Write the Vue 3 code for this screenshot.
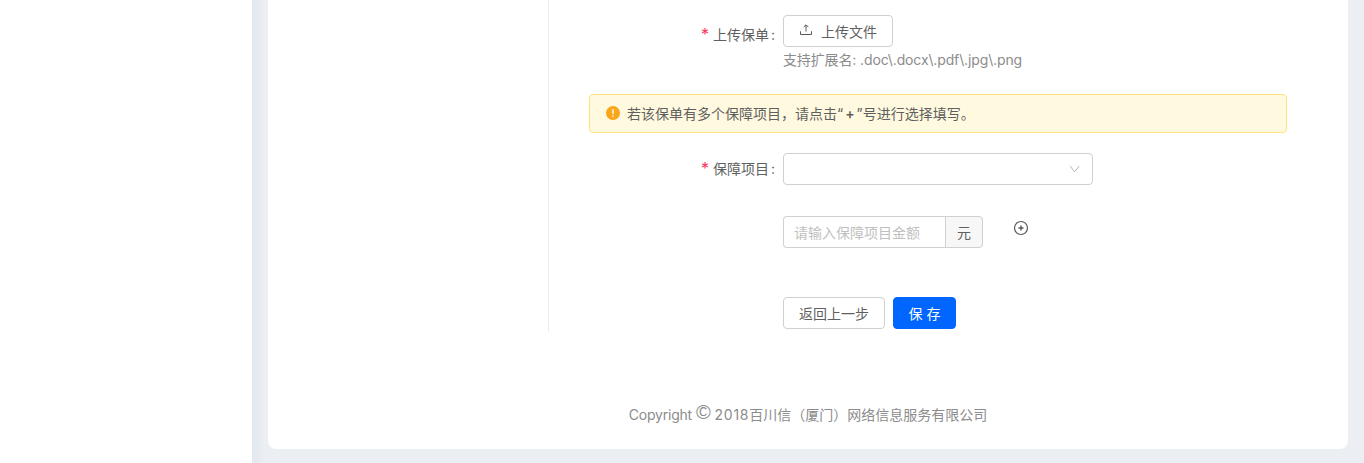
<script setup>
const labelRows = { upload: '上传保单', item: '保障项目' }
</script>

<template>
  <div class="page">
    <aside class="sidebar"></aside>
    <main class="main">
      <section class="card">
        <div class="content">
          <div class="side-panel"></div>
          <div class="form">
            <div class="row upload-row">
              <label class="label"><i class="star">*</i>{{ labelRows.upload }}<span class="colon">:</span></label>
              <div class="control">
                <button class="btn upload-btn" type="button">
                  <svg class="upload-icon" viewBox="0 0 14 14" width="14" height="14" fill="none" stroke="#595959" stroke-width="1">
                    <path d="M7 8.5V2M4.7 4.1 7 1.8l2.3 2.3M1.5 8.3v3.2h11V8.3" />
                  </svg>
                  <span>上传文件</span>
                </button>
                <p class="hint">支持扩展名: .doc\.docx\.pdf\.jpg\.png</p>
              </div>
            </div>
            <div class="alert">
              <svg class="alert-icon" viewBox="0 0 14 14" width="14" height="14">
                <circle cx="7" cy="7" r="7" fill="#faa61a" />
                <rect x="6.3" y="3" width="1.4" height="5.2" rx=".6" fill="#fff" />
                <circle cx="7" cy="10" r=".85" fill="#fff" />
              </svg>
              <span>若该保单有多个保障项目，请点击“<b class="plus-mark">+</b>”号进行选择填写。</span>
            </div>
            <div class="row item-row">
              <label class="label"><i class="star">*</i>{{ labelRows.item }}<span class="colon">:</span></label>
              <div class="select">
                <svg viewBox="0 0 12 12" width="12" height="12" fill="none" stroke="#b5b5b5" stroke-width="1">
                  <path d="M2 3 6.65 8.8 11.3 3" />
                </svg>
              </div>
            </div>
            <div class="row amount-row">
              <div class="input-group">
                <input class="amount" type="text" placeholder="请输入保障项目金额" />
                <span class="addon">元</span>
              </div>
              <svg class="plus" viewBox="0 0 16 16" width="16" height="16" fill="none" stroke="#595959">
                <circle cx="8" cy="8" r="6.5" stroke-width="1.2" />
                <path d="M8 5.5v5M5.5 8h5" stroke-width="1.4" />
              </svg>
            </div>
            <div class="row action-row">
              <button class="btn back" type="button">返回上一步</button>
              <button class="btn save" type="button">保 存</button>
            </div>
          </div>
        </div>
        <footer class="footer"><span class="brand">Copyright</span> <span class="copy">©</span> <span class="year">2018</span>百川信（厦门）网络信息服务有限公司</footer>
      </section>
    </main>
  </div>
</template>

<style>
html, body { margin: 0; padding: 0; background: #fff; }
</style>

<style scoped>
.page {
  display: flex;
  height: 463px;
  overflow: hidden;
  font-family: Inter, "Noto Sans CJK SC", sans-serif;
  font-size: 14px;
  color: #5f5f5f;
}
.sidebar { width: 252px; flex: none; background: #fff; }
.main {
  flex: 1;
  display: flex;
  padding: 0 16px 14px;
  background: linear-gradient(90deg, #e2e8f0 0, #ebeef2 12px);
}
.card {
  flex: 1;
  background: #fff;
  border-radius: 0 0 8px 8px;
  display: flex;
  flex-direction: column;
}
.content { display: flex; height: 332px; }
.side-panel { width: 280px; flex: none; border-right: 1px solid #ececec; }
.form { width: 698px; margin-left: 40px; }
.row { display: flex; }
.upload-row { padding-top: 15px; height: 94px; box-sizing: border-box; }
.label {
  width: 186px;
  margin-right: 8px;
  flex: none;
  height: 32px;
  padding-top: 10px;
  box-sizing: border-box;
  text-align: right;
  line-height: 20px;
}
.item-row .label { padding-top: 6px; }
.star { font-style: normal; color: #f5365c; margin-right: 4px; font-size: 16px; line-height: 14px; }
.colon { margin-left: 2px; }
.btn {
  height: 32px;
  box-sizing: border-box;
  border-radius: 4px;
  border: 1px solid #d0d0d0;
  background: #fff;
  color: #5f5f5f;
  font: inherit;
  padding: 0;
  cursor: pointer;
}
.upload-btn {
  width: 110px;
  display: flex;
  align-items: center;
  justify-content: center;
  gap: 8px;
}
.upload-icon { position: relative; top: -1px; }
.hint { margin: 3px 0 0; line-height: 20px; color: #8c8c8c; letter-spacing: -.13px; }
.alert {
  height: 39px;
  box-sizing: border-box;
  margin-bottom: 20px;
  padding: 0 0 1px 16px;
  display: flex;
  align-items: center;
  gap: 7px;
  background: #fffadf;
  border: 1px solid #ffe27d;
  border-radius: 4px;
}
.plus-mark { font-weight: 600; margin: 0 2px; }
.select {
  width: 310px;
  height: 32px;
  box-sizing: border-box;
  border: 1px solid #d0d0d0;
  border-radius: 4px;
  display: flex;
  align-items: center;
  justify-content: flex-end;
  padding-right: 12px;
}
.amount-row { margin-top: 31px; padding-left: 194px; }
.input-group { display: flex; width: 200px; height: 32px; }
.amount {
  width: 162px;
  box-sizing: border-box;
  border: 1px solid #d0d0d0;
  border-right: 0;
  border-radius: 4px 0 0 4px;
  padding: 0 10px;
  font: inherit;
  outline: none;
}
.amount::placeholder { color: #bfbfbf; opacity: 1; }
.addon {
  flex: 1;
  box-sizing: border-box;
  border: 1px solid #d0d0d0;
  border-radius: 0 4px 4px 0;
  background: #f7f7f7;
  display: flex;
  align-items: center;
  justify-content: center;
}
.plus { margin: 4px 0 0 30px; }
.action-row { margin-top: 49px; padding-left: 194px; gap: 8px; }
.back { width: 102px; }
.save { width: 63px; background: #0066ff; border-color: #0066ff; color: #fff; }
.footer {
  margin-top: 73px;
  line-height: 20px;
  text-align: center;
  color: #8c8c8c;
}
.brand { letter-spacing: -.22px; }
.copy {
  font-family: "Liberation Sans", sans-serif;
  font-size: 20px;
  line-height: 14px;
  position: relative;
  top: -1px;
}
.year { letter-spacing: .7px; }
</style>
